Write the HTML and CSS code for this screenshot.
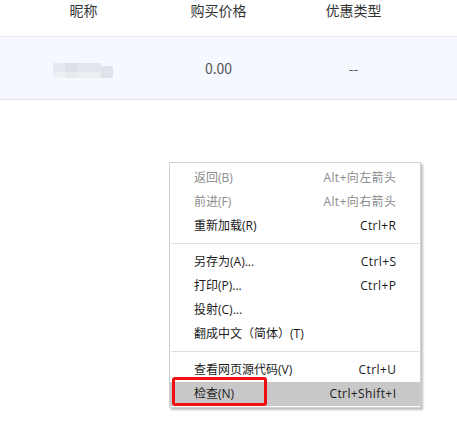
FILE: index.html
```html
<!DOCTYPE html>
<html lang="zh-CN">
<head>
<meta charset="utf-8">
<link rel="stylesheet" href="styles.css">
</head>
<body>
<div class="page">
  <div class="thead">
    <div class="cell">昵称</div>
    <div class="cell">购买价格</div>
    <div class="cell">优惠类型</div>
  </div>
  <div class="trow">
    <div class="cell"><span class="blur"><i class="b1"></i><i class="b2"></i><i class="b3"></i><i class="b4"></i></span></div>
    <div class="cell">0.00</div>
    <div class="cell">--</div>
  </div>

  <div class="menu">
    <div class="item disabled"><span>返回(B)</span><span class="key">Alt+向左箭头</span></div>
    <div class="item disabled"><span>前进(F)</span><span class="key">Alt+向右箭头</span></div>
    <div class="item"><span>重新加载(R)</span><span class="key">Ctrl+R</span></div>
    <div class="sep"></div>
    <div class="item"><span>另存为(A)...</span><span class="key">Ctrl+S</span></div>
    <div class="item"><span>打印(P)...</span><span class="key">Ctrl+P</span></div>
    <div class="item"><span>投射(C)...</span><span class="key"></span></div>
    <div class="item"><span>翻成中文（简体）(T)</span><span class="key"></span></div>
    <div class="sep"></div>
    <div class="item"><span>查看网页源代码(V)</span><span class="key">Ctrl+U</span></div>
    <div class="item active"><span>检查(N)</span><span class="key">Ctrl+Shift+I</span></div>
    <div class="mark"></div>
  </div>
</div>
</body>
</html>
```

FILE: styles.css
```css
html, body {
  margin: 0;
  padding: 0;
  background: #fff;
}
body {
  width: 457px;
  height: 427px;
  overflow: hidden;
  font-family: "Noto Sans CJK SC", "Liberation Sans", sans-serif;
}
.page {
  position: relative;
  width: 457px;
  height: 427px;
}
.thead, .trow {
  display: grid;
  grid-template-columns: 135px 135px 135px;
  padding-left: 16px;
  width: 441px;
}
.thead {
  height: 36px;
  border-bottom: 1px solid #e8e8e8;
  font-size: 14px;
  color: #333;
  align-items: start;
}
.thead .cell {
  line-height: 21px;
  text-align: center;
}
.trow {
  height: 62px;
  background: #f5f8fe;
  border-bottom: 1px solid #e6e6e6;
  font-size: 14px;
  color: #555;
  align-items: center;
}
.trow .cell {
  text-align: center;
  line-height: 20px;
}
.blur {
  display: inline-flex;
  height: 15px;
  vertical-align: middle;
  margin-left: -2px;
}
.blur i {
  display: block;
  height: 15px;
}
.b1 { width: 12px; background: linear-gradient(#e6e9ef 60%, #eef0f4 60%); }
.b2 { width: 12px; background: linear-gradient(#dde0e6 60%, #e8eaee 60%); }
.b3 { width: 24px; background: linear-gradient(#e3e6ec 60%, #eceef2 60%); }
.b4 { width: 12px; height: 12px !important; margin-top: 3px; background: #dfe3ea; }

.menu {
  position: absolute;
  left: 169px;
  top: 162px;
  width: 250px;
  background: #fff;
  border: 1px solid #d0d0d0;
  padding: 3px 0 1px;
  box-shadow: 2px 2px 2px rgba(0,0,0,0.25);
  font-family: "Open Sans", "Noto Sans CJK SC", sans-serif;
  font-size: 12px;
  color: #1a1a1a;
}
.item {
  display: flex;
  justify-content: space-between;
  align-items: center;
  height: 24px;
  padding: 0 24px 0 24px;
  line-height: 24px;
}
.key {
  letter-spacing: 0.4px;
  margin-right: -0.4px;
}
.item.disabled {
  color: #8c8c8c;
}
.item.active {
  background: #c8c8c8;
}
.sep {
  height: 1px;
  background: #e0e0e0;
  margin: 5px 1px 6px 1px;
}
.mark {
  position: absolute;
  left: 2px;
  top: 214px;
  width: 89px;
  height: 23px;
  border: 3px solid #f01010;
  border-radius: 3px;
}
```
